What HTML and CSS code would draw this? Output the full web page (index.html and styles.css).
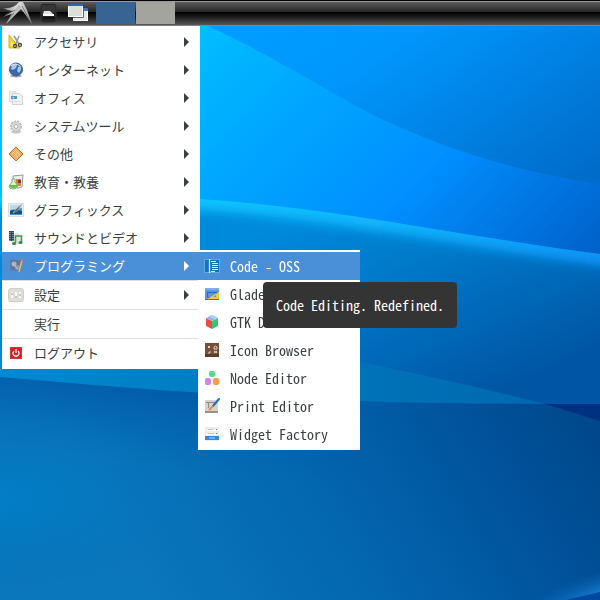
FILE: index.html
```html
<!DOCTYPE html>
<html lang="ja">
<head>
<meta charset="utf-8">
<meta name="viewport" content="width=device-width, initial-scale=1">
<title>デスクトップ</title>
<link rel="stylesheet" href="styles.css">
</head>
<body>
<svg class="wallpaper" viewBox="0 0 600 600" preserveAspectRatio="none" aria-hidden="true">
  <defs>
    <linearGradient id="sky" gradientUnits="userSpaceOnUse" x1="190" y1="20" x2="520" y2="340">
      <stop offset="0" stop-color="#00c0ff"/><stop offset=".3" stop-color="#00a6ff"/><stop offset=".6" stop-color="#008fff"/><stop offset="1" stop-color="#0060c8"/>
    </linearGradient>
    <linearGradient id="fold" gradientUnits="userSpaceOnUse" x1="300" y1="0" x2="480" y2="250">
      <stop offset="0" stop-color="#009cff"/><stop offset=".3" stop-color="#0096fc"/><stop offset="1" stop-color="#006cca"/>
    </linearGradient>
    <linearGradient id="mid" gradientUnits="userSpaceOnUse" x1="300" y1="215" x2="400" y2="440">
      <stop offset="0" stop-color="#008adc"/><stop offset=".35" stop-color="#007aca"/><stop offset="1" stop-color="#0055a4"/>
    </linearGradient>
    <linearGradient id="rim" x1="0" y1="0" x2="1" y2="0">
      <stop offset="0" stop-color="#00d4ff"/><stop offset=".6" stop-color="#12b8ff"/><stop offset="1" stop-color="#0b92f8"/>
    </linearGradient>
    <linearGradient id="band" gradientUnits="userSpaceOnUse" x1="0" y1="370" x2="600" y2="400">
      <stop offset="0" stop-color="#008ad0"/><stop offset=".6" stop-color="#0073b8"/><stop offset="1" stop-color="#0064ac"/>
    </linearGradient>
    <linearGradient id="deep" gradientUnits="userSpaceOnUse" x1="590" y1="400" x2="180" y2="640">
      <stop offset="0" stop-color="#00468a"/><stop offset=".25" stop-color="#00539c"/><stop offset=".6" stop-color="#0367b0"/><stop offset="1" stop-color="#0a76bc"/>
    </linearGradient>
    <radialGradient id="left" gradientUnits="userSpaceOnUse" cx="0" cy="0" r="1" gradientTransform="translate(0 500) scale(200 90)">
      <stop offset="0" stop-color="#007fc8" stop-opacity=".9"/><stop offset="1" stop-color="#0074bc" stop-opacity="0"/>
    </radialGradient>
    <linearGradient id="shade" gradientUnits="userSpaceOnUse" x1="190" y1="385" x2="180" y2="470">
      <stop offset="0" stop-color="#0055a4" stop-opacity=".8"/><stop offset="1" stop-color="#0060b0" stop-opacity="0"/>
    </linearGradient>
    <radialGradient id="glow" gradientUnits="userSpaceOnUse" cx="0" cy="0" r="1" gradientTransform="translate(606 594) rotate(-17) scale(100 24)">
      <stop offset="0" stop-color="#1c86e0"/><stop offset="1" stop-color="#0a66b4" stop-opacity="0"/>
    </radialGradient>
    <filter id="soft" x="-10%" y="-60%" width="120%" height="220%"><feGaussianBlur stdDeviation="6"/></filter>
    <clipPath id="below"><path d="M0 197C70 194 140 195 200 199C330 207 460 236 600 254V600H0Z"/></clipPath>
  </defs>
  <rect width="600" height="600" fill="url(#sky)"/>
  <path d="M208 26C270 55 330 92 367 112C440 147 500 168 600 184V26Z" fill="url(#fold)"/>
  <g clip-path="url(#below)">
    <rect y="180" width="600" height="420" fill="url(#mid)"/>
    <path d="M-20 197C70 194 140 195 200 199C330 207 460 236 620 257" fill="none" stroke="url(#rim)" stroke-width="22" filter="url(#soft)"/>
    <path d="M0 197C70 194 140 195 200 199C330 207 460 236 600 254" fill="none" stroke="url(#rim)" stroke-width="4" opacity=".55"/>
  </g>
  <path d="M0 340H280L360 362Q460 382 545 404H0Z" fill="url(#band)"/>
  <path d="M0 377C120 388 260 398 360 401C440 404 520 404 600 404V600H0Z" fill="url(#deep)"/>
  <path d="M0 377C120 388 260 398 360 401V500H0Z" fill="url(#shade)"/>
  <rect y="400" width="200" height="200" fill="url(#left)"/>
  <path d="M546 404H600V421Z" fill="#003080"/>
  <rect x="500" y="560" width="100" height="40" fill="url(#glow)"/>
  <path d="M566 600L600 592V600Z" fill="#0048a0"/>
</svg>

<header class="panel">
  <button class="launcher" aria-label="メニュー">
    <svg width="30" height="22" viewBox="0 0 30 22"><defs><linearGradient id="bird" x1="0" x2="1"><stop offset="0" stop-color="#888"/><stop offset=".5" stop-color="#e4e4e4"/><stop offset="1" stop-color="#999"/></linearGradient></defs>
      <path d="M1 6Q12 7 17 0L21 0L25 8L30 22L23 12L19 7L15 11L4 22L12 11L1 15L11 9Q6 9 1 6Z" fill="url(#bird)"/><path d="M17 2L9 13L4 22L19 6Z" fill="#bbb"/><path d="M13 8L3 13M12 11L5 19M20 4L28 19" stroke="#555" stroke-width=".7"/></svg>
  </button>
  <button class="launcher" aria-label="ファイルマネージャ">
    <svg width="18" height="20" viewBox="0 0 18 20"><rect x="1" y="1" width="15" height="18" rx="2" fill="#222" stroke="#333"/><path d="M2 2H15V9L2 12Z" fill="#444" opacity=".6"/><path d="M4 8H10L13 11H3Z" fill="#e4e4e4"/><path d="M3 11H14V13H3Z" fill="#fff"/><path d="M3 15H15" stroke="#000"/></svg>
  </button>
  <button class="launcher" aria-label="ウィンドウを最小化">
    <svg width="20" height="18" viewBox="0 0 20 18"><rect x="5.500" y="4.500" width="14" height="12" fill="#e9e9e5" stroke="#fff"/><path d="M5 4H20V7H5Z" fill="#3b72b8"/><rect x=".5" y=".5" width="14" height="12" fill="#deded9" stroke="#fff"/><path d="M0 0H15V2H0Z" fill="#2d66ad"/><path d="M15.500 4V13.500H5" fill="none" stroke="#666"/></svg>
  </button>
  <div class="pager">
    <button class="desk desk-current" aria-label="デスクトップ 1"></button>
    <button class="desk" aria-label="デスクトップ 2"></button>
  </div>
</header>

<main class="desktop">
  <ul class="menu menu-main">
    <li><button class="item"><svg class="icon" viewBox="0 0 16 16"><path d="M1 1V14H12Z" fill="#f3d22b" stroke="#d9b71f"/><path d="M3 7V12H7Z" fill="#fff6b0"/><path d="M6 2L11 10M11 2L8 10" stroke="#999" stroke-width="1.500"/><circle cx="7" cy="12" r="1.500" fill="none" stroke="#444" stroke-width="1.300"/><circle cx="12" cy="11" r="1.500" fill="none" stroke="#444" stroke-width="1.300"/></svg><span>アクセサリ</span><i class="arrow"></i></button></li>
    <li><button class="item"><svg class="icon" viewBox="0 0 16 16"><ellipse cx="8" cy="14" rx="6" ry="1.500" fill="#aaa"/><circle cx="8" cy="7.500" r="6.500" fill="#3769a8" stroke="#3a5f92"/><path d="M4 3Q7 1 9 3L8 6L5 8L3 7ZM10 5L13 4L13 8L11 11L9 9Z" fill="#a9c6e6"/><path d="M3 4Q7 0 12 4" stroke="#e3f0fb" fill="none"/></svg><span>インターネット</span><i class="arrow"></i></button></li>
    <li><button class="item"><svg class="icon" viewBox="0 0 16 16"><path d="M1.500 1.500H8V12H1.500Z" fill="#eee" stroke="#ddd"/><path d="M4.500 3.500H11L14.500 6V14.500H4.500Z" fill="#f2f2f2" stroke="#d4d4d4"/><path d="M3 6H9V9H3Z" fill="#4f9acb"/><path d="M4 7H6V9Z" fill="#b9e3f5"/><path d="M6 11.500H13" stroke="#ddd"/></svg><span>オフィス</span><i class="arrow"></i></button></li>
    <li><button class="item"><svg class="icon" viewBox="0 0 16 16"><ellipse cx="8" cy="14" rx="5" ry="1.500" fill="#ccc"/><circle cx="8" cy="8.500" r="5" fill="#d2d2d2" stroke="#bbb" stroke-width="2" stroke-dasharray="2 1"/><circle cx="8" cy="8.500" r="4" fill="#ddd"/><circle cx="8" cy="8.500" r="2" fill="#fff" stroke="#aaa"/></svg><span>システムツール</span><i class="arrow"></i></button></li>
    <li><button class="item"><svg class="icon" viewBox="0 0 16 16"><path d="M8 1L15 8L8 15L1 8Z" fill="#efb063" stroke="#c56a16"/><path d="M4 8L8 4M6 10L10 6M8 12L12 8M5 6L10 11M7 4L12 9" stroke="#fbe0b4" stroke-width=".6"/></svg><span>その他</span><i class="arrow"></i></button></li>
    <li><button class="item"><svg class="icon" viewBox="0 0 16 16"><path d="M5 2L15 1L14 13Q10 15 6 13Z" fill="#eee" stroke="#999"/><path d="M8 5H13V12H8Z" fill="#d98632"/><path d="M10 6H13V9H10Z" fill="#6b4321"/><path d="M4 5H7V8L10 12Q9 15 5 15Q1 15 1 12L4 8Z" fill="#d9f5cf" stroke="#8aa586"/><path d="M2 11H9Q10 14 5 14Q1 14 2 11Z" fill="#60c43b"/></svg><span>教育・教養</span><i class="arrow"></i></button></li>
    <li><button class="item"><svg class="icon" viewBox="0 0 16 16"><path d="M.5 1.500H15.500V14.500H.5Z" fill="#eee" stroke="#ddd"/><path d="M2 3H14V13H2Z" fill="#3c9ace"/><path d="M2 3H14V6L2 8Z" fill="#b5dbed"/><path d="M2 9Q7 7 14 9V12H2Z" fill="#155078"/><path d="M15 1L9 9L5 11L8 7Z" fill="#555" stroke="#ddd" stroke-width=".5"/></svg><span>グラフィックス</span><i class="arrow"></i></button></li>
    <li><button class="item"><svg class="icon" viewBox="0 0 16 16"><circle cx="8" cy="9" r="6" fill="#e3e3e3"/><path d="M1 1H6V11H1Z" fill="#31495a"/><path d="M2 2V11M5 2V11" stroke="#a9bdc8" stroke-dasharray="1 1"/><path d="M7.500 13V6H13.500V12" fill="none" stroke="#38a04b" stroke-width="1.500"/><ellipse cx="6" cy="13.500" rx="2" ry="1.500" fill="#299040"/><ellipse cx="12.500" cy="12.500" rx="2" ry="1.500" fill="#299040"/></svg><span>サウンドとビデオ</span><i class="arrow"></i></button></li>
    <li><button class="item item-active" aria-expanded="true"><svg class="icon" viewBox="0 0 16 16"><path d="M2 2H13V13L2 12Z" fill="#60779a"/><circle cx="6" cy="6" r="2.500" fill="#a4b1c6"/><circle cx="9.500" cy="9.500" r="2.500" fill="#8b9ab3"/><path d="M4 5L10 11" stroke="#b9c3d4"/><path d="M14 2L12 10L11 14" fill="none" stroke="#edb849" stroke-width="1.500"/><path d="M14 1L13.500 3" stroke="#e26969" stroke-width="2"/></svg><span>プログラミング</span><i class="arrow"></i></button></li>
    <li class="divided"><button class="item"><svg class="icon" viewBox="0 0 16 16"><rect x=".5" y="1.500" width="15" height="13" rx="2" fill="#deded9" stroke="#d0d0ca"/><path d="M4 5V11M8 5V11M12 5V11" stroke="#f8f8f8" stroke-width="2"/><path d="M4 6V8M8 9V11M12 7V9" stroke="#999"/></svg><span>設定</span><i class="arrow"></i></button></li>
    <li class="divided"><button class="item"><span class="icon"></span><span>実行</span></button></li>
    <li class="divided"><button class="item"><svg class="icon" viewBox="0 0 16 16"><rect x="2.500" y="2.500" width="11" height="11" fill="#d91f24" stroke="#d0393c"/><path d="M6 6A3 3 0 1 0 10 6" fill="none" stroke="#fff" stroke-width="1.300"/><path d="M8 4V8" stroke="#fff" stroke-width="1.300"/></svg><span>ログアウト</span></button></li>
  </ul>

  <ul class="menu menu-sub">
    <li><button class="item item-active" aria-describedby="tip"><svg class="icon" viewBox="0 0 16 16"><path d="M.5 1.500H15.500V14.500H.5Z" fill="#0f76bd" stroke="#65a9dd"/><path d="M5.500 1V15" stroke="#d7ecfa" stroke-width="1.300"/><path d="M7 3.500H12M8 5.500H14M8 7.500H14M8 9.500H14M8 11.500H14M7 13.500H11" stroke="#d7ecfa"/></svg><span>Code - OSS</span></button></li>
    <li><button class="item"><svg class="icon" viewBox="0 0 16 16"><path d="M1 2H15V14H1Z" fill="#5b94e4"/><path d="M1 2H15V4H1Z" fill="#80aeea"/><path d="M3.500 6.500H12.500V11.500H3.500Z" fill="none" stroke="#2767bd"/><path d="M15 6V13H3Z" fill="#f3cb35"/><path d="M1 13H15V14H1Z" fill="#3f74c4"/><path d="M12 9V11H9Z" fill="#5b94e4"/></svg><span>Glade</span></button></li>
    <li><button class="item"><svg class="icon" viewBox="0 0 16 16"><path d="M2 4L8 7V15L2 12Z" fill="#ed4b48"/><path d="M14 4L8 7V15L14 12Z" fill="#36c66d"/><path d="M8 1L14 4L8 7L2 4Z" fill="#8fb6f0"/><path d="M8 1L14 4L11 5.500L5 2.500Z" fill="#b2cff5"/></svg><span>GTK Demo</span></button></li>
    <li><button class="item"><svg class="icon" viewBox="0 0 16 16"><path d="M1 1H15V15H1Z" fill="#765039"/><path d="M1 12H15V15H1Z" fill="#5c3e2b"/><path d="M4 4L6 6M6 4L4 6M10 5L11.500 4L13 5V7H10ZM6 9V11H4M10 9L13 11M13 9L10 11" fill="none" stroke="#e5d4c4"/></svg><span>Icon Browser</span></button></li>
    <li><button class="item"><svg class="icon" viewBox="0 0 16 16"><rect x="5" y="1" width="6" height="6" rx="2" fill="#51df86"/><rect x="1" y="8" width="6" height="7" rx="2" fill="#d784de"/><rect x="9" y="8" width="6" height="7" rx="2" fill="#ff9947"/></svg><span>Node Editor</span></button></li>
    <li><button class="item"><svg class="icon" viewBox="0 0 16 16"><path d="M1 2H14V14H1Z" fill="#d6d3cf"/><path d="M1 13H14V15H1Z" fill="#96928d"/><path d="M2 4.500H12M4.500 4V10" stroke="#8f8b86"/><path d="M15 1L9 8" stroke="#286bc5" stroke-width="2" stroke-linecap="round"/><path d="M9 8L5 12" stroke="#ed903b" stroke-width="2"/></svg><span>Print Editor</span></button></li>
    <li><button class="item"><svg class="icon" viewBox="0 0 16 16"><rect x="1" y="1" width="14" height="14" rx="1" fill="#eeedeb"/><path d="M2 4.500H15M2 8.500H15" stroke="#fff"/><path d="M4 3.500H9M4 7.500H10" stroke="#c4c4c4"/><path d="M12 3.500H13M12 7.500H13" stroke="#777"/><path d="M1 10H15V14H1Z" fill="#3686e6"/><path d="M5 12H11" stroke="#d5e6fa" stroke-width=".8"/></svg><span>Widget Factory</span></button></li>
  </ul>

  <div class="tooltip" id="tip" role="tooltip">Code Editing. Redefined.</div>
</main>
</body>
</html>
```
FILE: styles.css
```css
* {
  box-sizing: border-box;
}

body {
  margin: 0;
  min-height: 100vh;
  overflow: hidden;
  color: #3a3f42;
  background: #0060ac;
  font: 13px/28px "Noto Sans CJK JP", sans-serif;
}

button {
  margin: 0;
  padding: 0;
  border: 0;
  background: none;
  color: inherit;
  font: inherit;
}

.wallpaper {
  position: fixed;
  inset: 0;
  z-index: -1;
  width: 100%;
  height: 100%;
}

.panel {
  display: flex;
  align-items: center;
  gap: 8px;
  height: 26px;
  padding: 0 2px;
  border-top: 1px solid #000;
  border-bottom: 1px solid #858080;
  background: linear-gradient(#999 0 1px, #5c5a5a 1px, #262626 11px, #000 11px, #151515 15px, #585656 100%);
}

.launcher {
  display: flex;
}

.launcher:nth-child(2) {
  margin-right: 2px;
}

.pager {
  display: flex;
  gap: 1px;
}

.desk {
  width: 39px;
  height: 22px;
  background: #a4a49f;
}

.desk-current {
  background: #386494;
}

.desktop {
  position: relative;
}

.menu {
  margin: 0;
  padding: 2px 0;
  list-style: none;
  background: #fff;
}

.menu-main {
  width: 198px;
  margin-left: 2px;
}

.menu-sub {
  position: absolute;
  top: 224px;
  left: 198px;
  width: 162px;
  font-family: "Noto Sans Mono CJK JP", "Liberation Mono", monospace;
  font-size: 14px;
}

.item {
  display: flex;
  align-items: center;
  gap: 10px;
  width: 100%;
  height: 28px;
  padding: 0 11px 0 6px;
  text-align: left;
  white-space: nowrap;
}

.item-active {
  background: #4a90d9;
  color: #fff;
}

.divided {
  border-top: 1px solid #e0e0e0;
}

.icon {
  flex: none;
  width: 16px;
  height: 16px;
}

.arrow {
  margin-left: auto;
  border: solid transparent;
  border-width: 5px 0 5px 5px;
  border-left-color: currentColor;
}

.tooltip {
  position: absolute;
  top: 256px;
  left: 263px;
  padding: 9px 13px;
  border-radius: 4px;
  background: #343434;
  color: #fff;
  font-family: "Noto Sans Mono CJK JP", "Liberation Mono", monospace;
  font-size: 14px;
  white-space: nowrap;
}
```
